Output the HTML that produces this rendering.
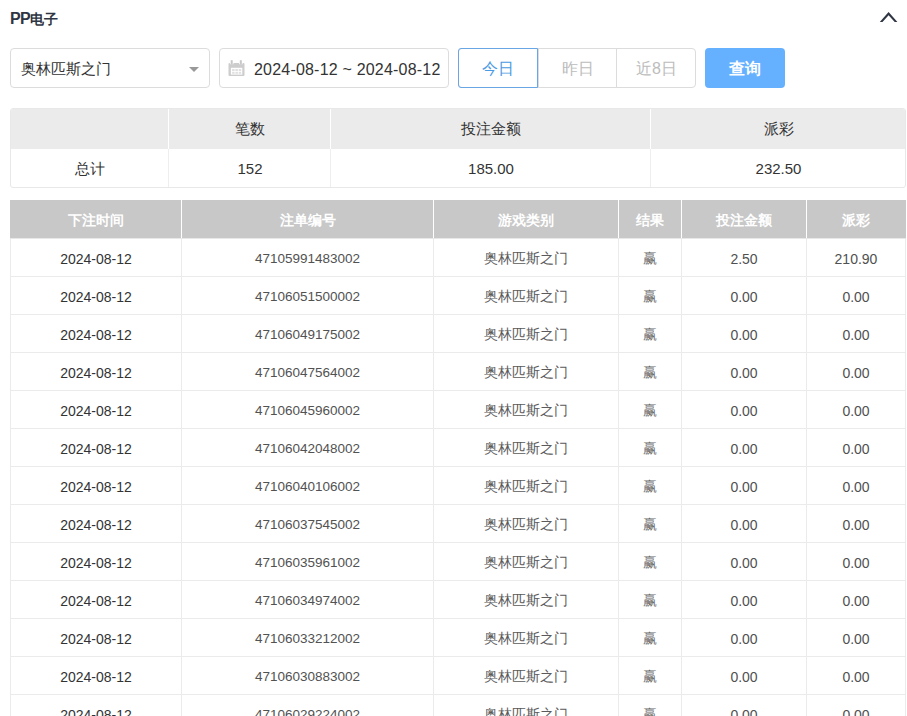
<!DOCTYPE html>
<html><head><meta charset="utf-8">
<style>
*{box-sizing:border-box;margin:0;padding:0}
html,body{width:907px;height:716px;overflow:hidden;background:#fff;font-family:"Liberation Sans",sans-serif;}
.title{position:absolute;left:10px;top:9px;font-size:15px;font-weight:bold;color:#2f3542;line-height:20px;white-space:nowrap}
.tl{font-size:16px;letter-spacing:-0.6px}
.tc{font-size:14px;position:relative;top:-0.5px}
.chev{position:absolute;left:870px;top:0px}
.sel{position:absolute;left:10px;top:48px;width:200px;height:40px;border:1px solid #dcdcdc;border-radius:4px}
.sel span{position:absolute;left:10px;top:10px;font-size:15px;color:#333;line-height:20px;white-space:nowrap}
.caret{position:absolute;left:178px;top:18px;width:0;height:0;border-left:5px solid transparent;border-right:5px solid transparent;border-top:5px solid #999}
.date{position:absolute;left:219px;top:48px;width:230px;height:40px;border:1px solid #dcdcdc;border-radius:4px}
.date span{position:absolute;left:34px;top:11px;font-size:16px;color:#333;line-height:20px;white-space:nowrap;letter-spacing:0.2px}
.cal{position:absolute;left:8px;top:11px}
.bg{position:absolute;left:458px;top:48px;height:40px;width:238px;border:1px solid #dcdcdc;border-radius:4px}
.b{position:absolute;top:-1px;height:40px;font-size:16px;line-height:40px;text-align:center;color:#bcbcbc}
.b1{left:-1px;width:80px;border:1px solid #6aa6e6;color:#4a9be3;border-radius:3px 0 0 3px}
.b2{left:79px;width:79px;border-left:1px solid #dcdcdc;top:0;height:38px;line-height:39px}
.b3{left:157px;width:80px;border-left:1px solid #dcdcdc;top:0;height:38px;line-height:39px}
.q{position:absolute;left:705px;top:48px;width:80px;height:40px;background:#66b1ff;border-radius:4px;color:#fff;font-size:16px;font-weight:bold;line-height:41px;text-align:center}
table{border-collapse:collapse;position:absolute;font-size:14px;color:#333;table-layout:fixed}
.sum{position:absolute;left:10px;top:108px;width:896px;height:80px;border:1px solid #e8e8e8;border-radius:3px;overflow:hidden}
.sh{position:absolute;left:-1px;top:-1px;width:896px;height:41px;background:#ebebeb}
.vl{position:absolute;top:40px;width:1px;height:40px;background:#eeeeee}
.vw{position:absolute;top:0;width:1px;height:40px;background:#fff}
.st{position:absolute;height:40px;line-height:40px;text-align:center;font-size:15px;color:#333;white-space:nowrap}
.data{left:10px;top:200px;width:895px}
.data th{background:#c8c8c8;color:#fff;font-weight:bold;font-size:13.8px;height:38px;border:1px solid #fff;border-top:none;border-bottom:1px solid #e8e8e8;padding-top:5px}
.data th:first-child{border-left-color:#c8c8c8}.data th:last-child{border-right-color:#c8c8c8}
.data td{border:1px solid #ebebeb;text-align:center;height:38px;font-size:14px;color:#333;padding-top:3px}
.data td.g{font-size:13.5px;color:#5a5a5a}
.data td.r{color:#6a6a6a;font-size:13.5px}
.data td.n{font-size:13.5px;color:#525252}
.data td.m{color:#505050}

</style></head><body>
<div class="title"><span class="tl">PP</span><span class="tc">电子</span></div>
<svg class="chev" width="37" height="30" viewBox="870 0 37 30"><path d="M888.6 12.1 L897.4 21.9 L894.7 21.9 L888.6 15.2 L882.5 21.9 L879.8 21.9 Z" fill="#2f3542"/></svg>
<div class="sel"><span>奥林匹斯之门</span><i class="caret"></i></div>
<div class="date"><svg class="cal" width="18" height="18" viewBox="0 0 18 18"><rect x="0.5" y="3" width="16" height="13" rx="1" fill="#cdcdcd"/><rect x="2.9" y="7.8" width="11.4" height="6.8" fill="#fff"/><g fill="#e0e0e0"><rect x="4.1" y="9" width="2.5" height="2"/><rect x="7.4" y="9" width="2.5" height="2"/><rect x="10.7" y="9" width="2.5" height="2"/><rect x="4.1" y="11.8" width="2.5" height="2"/><rect x="7.4" y="11.8" width="2.5" height="2"/><rect x="10.7" y="11.8" width="2.5" height="2"/></g><rect x="1.9" y="2.6" width="3.6" height="1.6" fill="#fff"/><rect x="11" y="2.6" width="3.6" height="1.6" fill="#fff"/><g fill="#c8c8c8"><rect x="2.7" y="0.2" width="2" height="4.2"/><rect x="11.8" y="0.2" width="2" height="4.2"/></g></svg><span>2024-08-12 ~ 2024-08-12</span></div>
<div class="bg"><div class="b b1">今日</div><div class="b b2">昨日</div><div class="b b3">近8日</div></div>
<div class="q">查询</div>
<div class="sum">
<div class="sh"></div>
<div class="vl" style="left:157px"></div><div class="vl" style="left:319px"></div><div class="vl" style="left:639px"></div><div class="vw" style="left:157px"></div><div class="vw" style="left:319px"></div><div class="vw" style="left:639px"></div>
<div class="st" style="left:0;width:158px;top:0">&nbsp;</div>
<div class="st" style="left:158px;width:162px;top:0">笔数</div>
<div class="st" style="left:320px;width:320px;top:0">投注金额</div>
<div class="st" style="left:640px;width:255px;top:0">派彩</div>
<div class="st" style="left:0;width:158px;top:40px">总计</div>
<div class="st n" style="left:158px;width:162px;top:40px">152</div>
<div class="st n" style="left:320px;width:320px;top:40px">185.00</div>
<div class="st n" style="left:640px;width:255px;top:40px">232.50</div>
</div>
<table class="data">
<colgroup><col style="width:171px"><col style="width:252px"><col style="width:185px"><col style="width:63px"><col style="width:125px"><col style="width:99px"></colgroup>
<tr><th>下注时间</th><th>注单编号</th><th>游戏类别</th><th>结果</th><th>投注金额</th><th>派彩</th></tr>
<tr><td class="d">2024-08-12</td><td class="n">47105991483002</td><td class="g">奥林匹斯之门</td><td class="r">赢</td><td class="m">2.50</td><td class="m">210.90</td></tr>
<tr><td class="d">2024-08-12</td><td class="n">47106051500002</td><td class="g">奥林匹斯之门</td><td class="r">赢</td><td class="m">0.00</td><td class="m">0.00</td></tr>
<tr><td class="d">2024-08-12</td><td class="n">47106049175002</td><td class="g">奥林匹斯之门</td><td class="r">赢</td><td class="m">0.00</td><td class="m">0.00</td></tr>
<tr><td class="d">2024-08-12</td><td class="n">47106047564002</td><td class="g">奥林匹斯之门</td><td class="r">赢</td><td class="m">0.00</td><td class="m">0.00</td></tr>
<tr><td class="d">2024-08-12</td><td class="n">47106045960002</td><td class="g">奥林匹斯之门</td><td class="r">赢</td><td class="m">0.00</td><td class="m">0.00</td></tr>
<tr><td class="d">2024-08-12</td><td class="n">47106042048002</td><td class="g">奥林匹斯之门</td><td class="r">赢</td><td class="m">0.00</td><td class="m">0.00</td></tr>
<tr><td class="d">2024-08-12</td><td class="n">47106040106002</td><td class="g">奥林匹斯之门</td><td class="r">赢</td><td class="m">0.00</td><td class="m">0.00</td></tr>
<tr><td class="d">2024-08-12</td><td class="n">47106037545002</td><td class="g">奥林匹斯之门</td><td class="r">赢</td><td class="m">0.00</td><td class="m">0.00</td></tr>
<tr><td class="d">2024-08-12</td><td class="n">47106035961002</td><td class="g">奥林匹斯之门</td><td class="r">赢</td><td class="m">0.00</td><td class="m">0.00</td></tr>
<tr><td class="d">2024-08-12</td><td class="n">47106034974002</td><td class="g">奥林匹斯之门</td><td class="r">赢</td><td class="m">0.00</td><td class="m">0.00</td></tr>
<tr><td class="d">2024-08-12</td><td class="n">47106033212002</td><td class="g">奥林匹斯之门</td><td class="r">赢</td><td class="m">0.00</td><td class="m">0.00</td></tr>
<tr><td class="d">2024-08-12</td><td class="n">47106030883002</td><td class="g">奥林匹斯之门</td><td class="r">赢</td><td class="m">0.00</td><td class="m">0.00</td></tr>
<tr><td class="d">2024-08-12</td><td class="n">47106029224002</td><td class="g">奥林匹斯之门</td><td class="r">赢</td><td class="m">0.00</td><td class="m">0.00</td></tr>
</table>

</body></html>
